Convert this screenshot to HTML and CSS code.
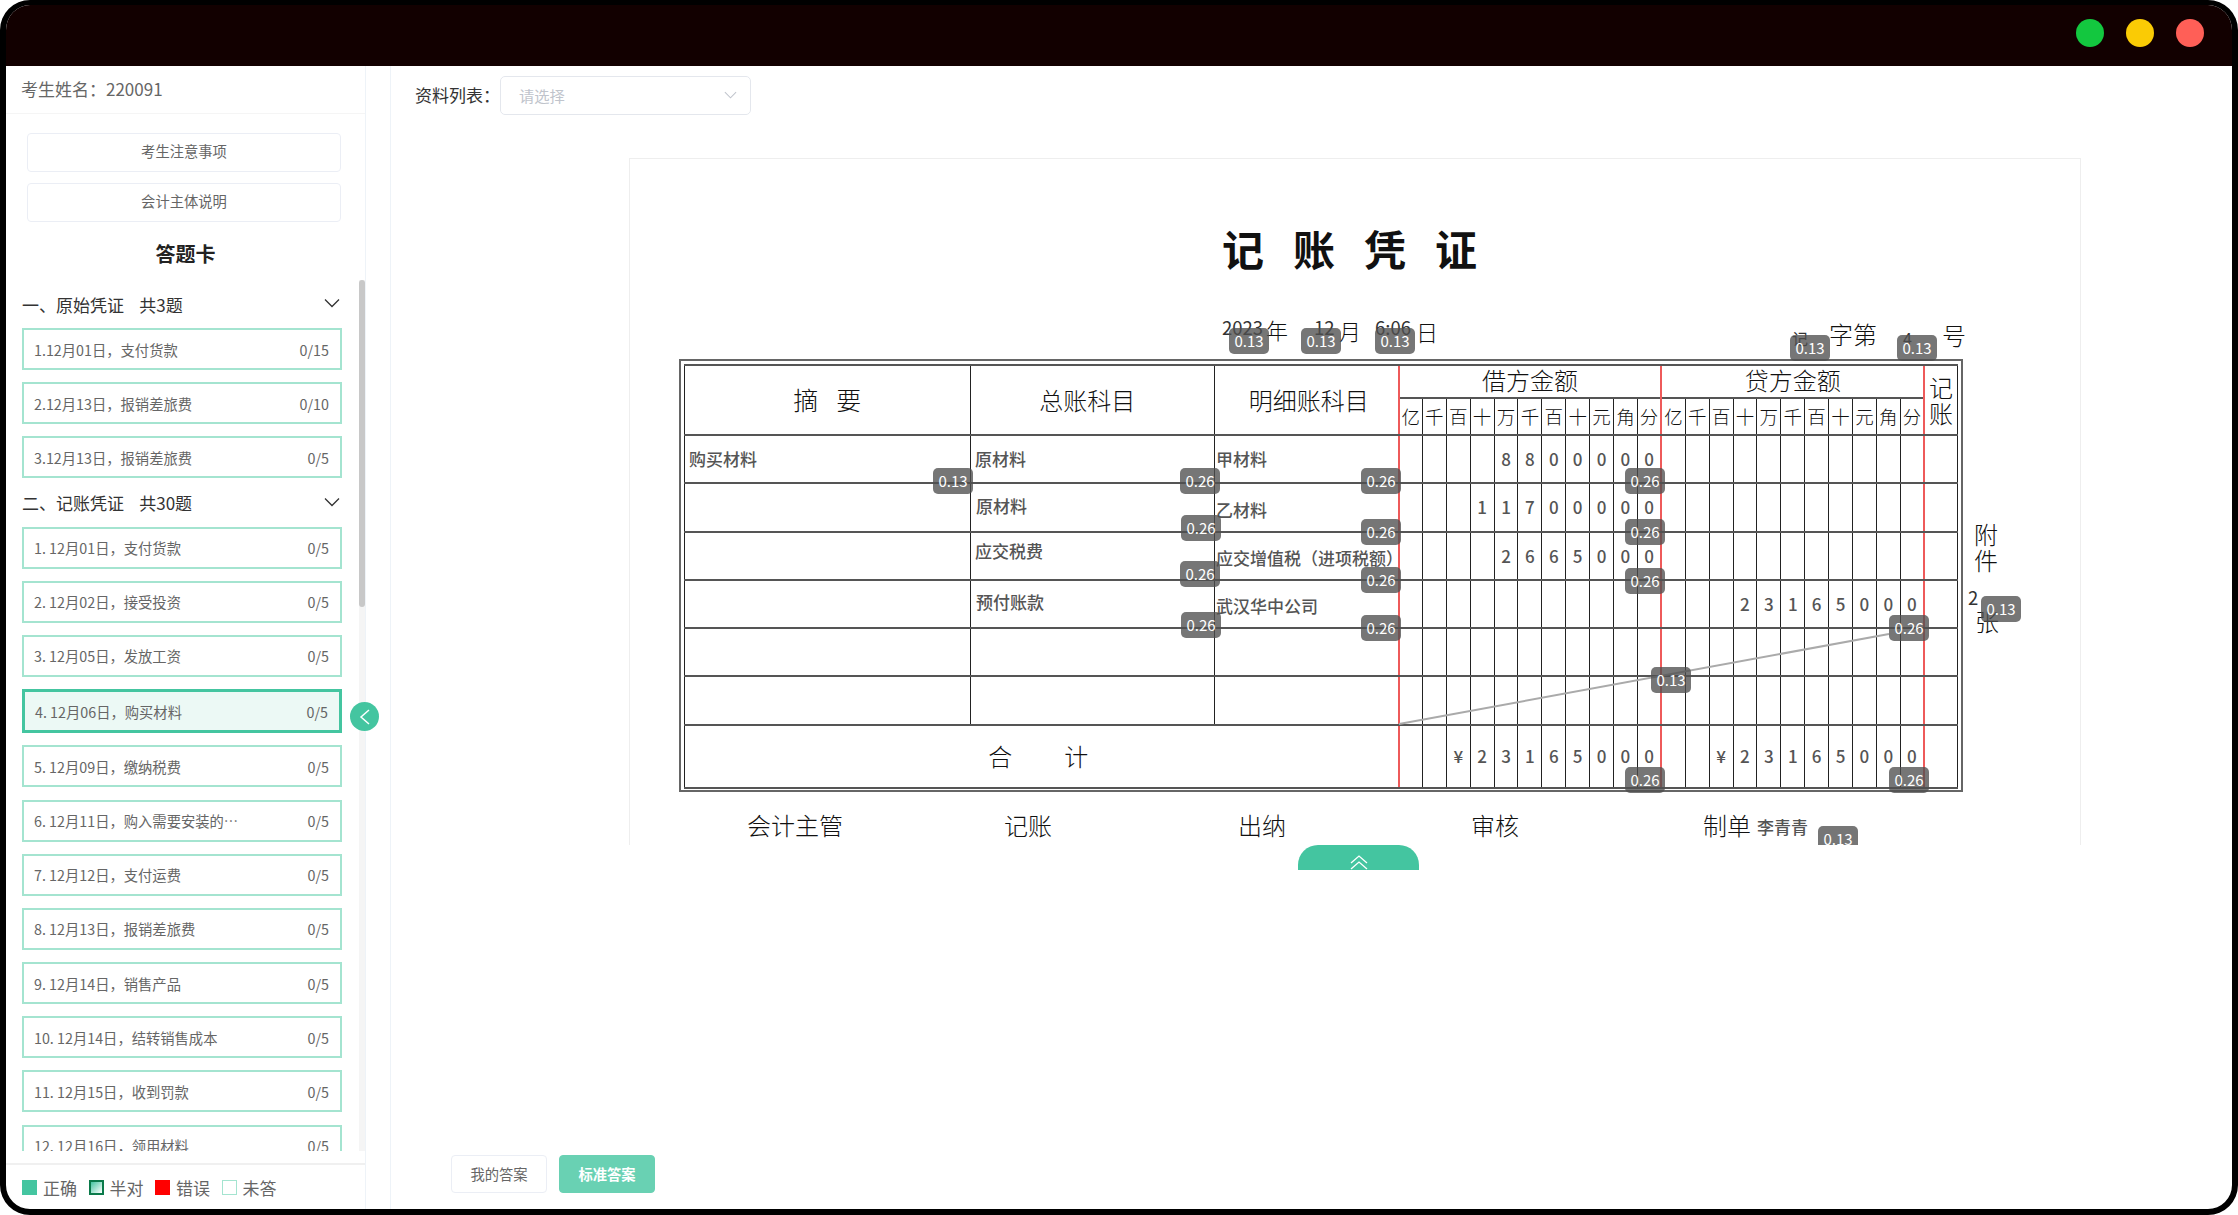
FILE: index.html
```html
<!DOCTYPE html>
<html lang="zh-CN">
<head>
    <meta charset="UTF-8">
    <meta name="viewport" content="width=device-width, initial-scale=1.0">
    <title>答题卡</title>
    <link rel="stylesheet" href="styles.css">
</head>
<body>
    <div class="window">
        <header class="titlebar">
            <span class="light green"></span>
            <span class="light yellow"></span>
            <span class="light red"></span>
        </header>

        <div class="content">
            <aside class="sidebar">
                <div class="student">考生姓名：220091</div>
                <button class="side-btn first">考生注意事项</button>
                <button class="side-btn">会计主体说明</button>
                <h2 class="card-title">答题卡</h2>

                <div class="list">
                    <div class="section-head">
                        <span>一、原始凭证&nbsp;&nbsp;&nbsp;&nbsp;共3题</span>
                        <svg class="chevron" viewBox="0 0 16 10"><polyline points="1,1.5 8,8.5 15,1.5"/></svg>
                    </div>
                    <div class="item"><span>1.12月01日，支付货款</span><span>0/15</span></div>
                    <div class="item"><span>2.12月13日，报销差旅费</span><span>0/10</span></div>
                    <div class="item"><span>3.12月13日，报销差旅费</span><span>0/5</span></div>

                    <div class="section-head second">
                        <span>二、记账凭证&nbsp;&nbsp;&nbsp;&nbsp;共30题</span>
                        <svg class="chevron" viewBox="0 0 16 10"><polyline points="1,1.5 8,8.5 15,1.5"/></svg>
                    </div>
                    <div class="item"><span>1. 12月01日，支付货款</span><span>0/5</span></div>
                    <div class="item"><span>2. 12月02日，接受投资</span><span>0/5</span></div>
                    <div class="item"><span>3. 12月05日，发放工资</span><span>0/5</span></div>
                    <div class="item active"><span>4. 12月06日，购买材料</span><span>0/5</span></div>
                    <div class="item"><span>5. 12月09日，缴纳税费</span><span>0/5</span></div>
                    <div class="item"><span>6. 12月11日，购入需要安装的…</span><span>0/5</span></div>
                    <div class="item"><span>7. 12月12日，支付运费</span><span>0/5</span></div>
                    <div class="item"><span>8. 12月13日，报销差旅费</span><span>0/5</span></div>
                    <div class="item"><span>9. 12月14日，销售产品</span><span>0/5</span></div>
                    <div class="item"><span>10. 12月14日，结转销售成本</span><span>0/5</span></div>
                    <div class="item"><span>11. 12月15日，收到罚款</span><span>0/5</span></div>
                    <div class="item"><span>12. 12月16日，领用材料</span><span>0/5</span></div>

                    <div class="scroll-track"><div class="scroll-thumb"></div></div>
                </div>

                <div class="legend">
                    <span class="key"><i class="swatch right"></i>正确</span>
                    <span class="key"><i class="swatch half"></i>半对</span>
                    <span class="key"><i class="swatch wrong"></i>错误</span>
                    <span class="key"><i class="swatch blank"></i>未答</span>
                </div>

                <div class="collapse">
                    <svg viewBox="0 0 12 16"><polyline points="10,1 2,8 10,15"/></svg>
                </div>
            </aside>
            <div class="gutter"></div>

            <main class="main">
                <div class="toolbar">
                    <label>资料列表：</label>
                    <div class="select">
                        <span>请选择</span>
                        <svg class="select-arrow" viewBox="0 0 16 10"><polyline points="1,1.5 8,8.5 15,1.5"/></svg>
                    </div>
                </div>

                <div class="voucher" id="voucher">
                    <div class="sheet">
                        <table>
                            <colgroup>
                                <col class="col-a"><col class="col-b"><col class="col-c">
                                <col span="22" class="col-unit">
                                <col class="col-mark">
                            </colgroup>
                            <thead id="voucherHead"></thead>
                            <tbody id="voucherBody"></tbody>
                        </table>
                    </div>
                    <svg class="slash" viewBox="0 0 1450 685">
                        <line x1="769" y1="565" x2="1259" y2="475"/>
                    </svg>
                </div>

                <div class="pull-up">
                    <svg viewBox="0 0 20 16"><polyline points="2,8 10,1 18,8"/><polyline points="2,14 10,7 18,14"/></svg>
                </div>

                <div class="answer-btns">
                    <button class="answer-btn">我的答案</button>
                    <button class="answer-btn on">标准答案</button>
                </div>
            </main>
        </div>
    </div>

    <script src="script.js"></script>
</body>
</html>
```

FILE: styles.css
```css
* {
    box-sizing: border-box;
}

body {
    margin: 0;
    background: #fff;
    font-family: "Noto Sans CJK SC", "Noto Sans", sans-serif;
    overflow: hidden;
}

.window {
    width: 2238px;
    height: 1215px;
    border: solid #000;
    border-width: 5px 6px 6px;
    border-radius: 30px;
    overflow: hidden;
    display: flex;
    flex-direction: column;
    background: #fff;
}

.titlebar {
    height: 61px;
    flex: none;
    background: #120000;
    display: flex;
    justify-content: flex-end;
    align-items: center;
    gap: 22px;
    padding-right: 28px;
    padding-bottom: 5px;
}

.light {
    width: 28px;
    height: 28px;
    border-radius: 50%;
}

.light.green { background: #13c73f; }
.light.yellow { background: #facb05; }
.light.red { background: #ff5f57; }

.content {
    flex: 1;
    display: flex;
    min-height: 0;
}

/* sidebar */
.sidebar {
    width: 360px;
    flex: none;
    border-right: 1px solid #eef3f8;
    display: flex;
    flex-direction: column;
    position: relative;
}

.student {
    height: 48px;
    padding-left: 15px;
    border-bottom: 1px solid #f5f5f5;
    font-size: 17px;
    line-height: 46px;
    color: #666;
}

.side-btn {
    display: block;
    width: 314px;
    height: 39px;
    margin: 11px 0 0 21px;
    background: #fff;
    border: 1px solid #ebeef5;
    border-radius: 4px;
    font-family: inherit;
    font-size: 14.3px;
    color: #666;
    padding: 0 0 5px;
}

.side-btn.first {
    margin-top: 19px;
}

.card-title {
    margin: 13px 0 0;
    height: 45px;
    text-align: center;
    font-size: 20px;
    line-height: 38px;
    font-weight: 700;
    color: #222;
}

.list {
    flex: 1;
    min-height: 0;
    overflow: hidden;
    position: relative;
    padding: 7px 0 0 16px;
}

.section-head {
    width: 320px;
    height: 34px;
    margin-bottom: 7px;
    display: flex;
    justify-content: space-between;
    align-items: center;
    font-size: 17px;
    color: #333;
}

.section-head.second {
    margin-top: -5px;
}

.chevron {
    width: 16px;
    height: 10px;
    margin-right: 2px;
    margin-bottom: 2px;
}

.chevron polyline,
.select-arrow polyline {
    fill: none;
    stroke: #333;
    stroke-width: 1.3;
}

.item {
    width: 320px;
    height: 42px;
    margin-bottom: 12.2px;
    padding: 0 11px 0 10px;
    border: 2px solid #a4e4d0;
    display: flex;
    justify-content: space-between;
    align-items: center;
    font-size: 14.3px;
    color: #666;
}

.item.active {
    height: 44px;
    border: 3px solid #44c5a0;
    background: #ecf9f5;
}

.scroll-track {
    position: absolute;
    right: 0;
    top: 0;
    bottom: 0;
    width: 6px;
    background: #f5f5f5;
}

.scroll-thumb {
    height: 327px;
    background: #c8c8c8;
    border-radius: 3px;
}

.legend {
    height: 46px;
    flex: none;
    margin-top: 12px;
    border-top: 2px solid #f0f0f0;
    padding-left: 16px;
    display: flex;
    align-items: center;
    gap: 11.5px;
    font-size: 17px;
    color: #666;
}

.key {
    display: flex;
    align-items: center;
    gap: 6px;
}

.swatch {
    display: block;
    width: 15px;
    height: 15px;
}

.swatch.right { background: #44c5a0; }
.swatch.half { border: 2px solid #0a7a4a; background: linear-gradient(135deg, #44c5a0, #fff); }
.swatch.wrong { background: #ff0000; }
.swatch.blank { border: 1px solid #a4e4d0; }

.collapse {
    position: absolute;
    left: 344px;
    top: 636px;
    width: 29px;
    height: 29px;
    border-radius: 50%;
    background: #44c5a0;
    display: flex;
    align-items: center;
    justify-content: center;
}

.collapse svg {
    width: 12px;
    height: 16px;
}

.collapse polyline {
    fill: none;
    stroke: #fff;
    stroke-width: 1.5;
}

.gutter {
    width: 25px;
    flex: none;
    border-right: 1px solid #eef3f8;
}

/* main area */
.main {
    flex: 1;
    min-width: 0;
    display: flex;
    flex-direction: column;
    position: relative;
}

.toolbar {
    display: flex;
    align-items: center;
    height: 39px;
    margin: 10px 0 0 24px;
    font-size: 17px;
    color: #333;
}

.toolbar label {
    width: 85px;
    padding-bottom: 2px;
}

.select {
    width: 251px;
    height: 39px;
    border: 1px solid #e4e7ed;
    border-radius: 5px;
    display: flex;
    justify-content: space-between;
    align-items: center;
    padding: 0 13px 2px 18px;
    font-size: 15.3px;
    color: #c0c4cc;
}

.select-arrow {
    width: 13px;
    height: 8px;
}

.select-arrow polyline {
    stroke: #c0c4cc;
}

.voucher {
    position: relative;
    width: 1452px;
    height: 687px;
    flex: none;
    margin: 43px 0 0 238px;
    border: 1px solid #eee;
    border-bottom: none;
    overflow: hidden;
}

.sheet {
    width: 1284px;
    height: 433px;
    margin: 200px 0 0 49px;
    padding: 3px;
    border: 2px solid #666;
}

table {
    width: 1273px;
    height: 423px;
    table-layout: fixed;
    border-collapse: collapse;
}

.col-a { width: 285.5px; }
.col-b { width: 244.5px; }
.col-c { width: 184px; }
.col-unit { width: 23.9px; }
.col-mark { width: 33.2px; }

th, td {
    padding: 0;
    border: 1px solid #222;
    border-top: 2px solid #555;
    border-bottom: 2px solid #555;
    text-align: center;
    overflow: hidden;
    white-space: nowrap;
    line-height: 1;
}

th {
    font-weight: 300;
    color: #111;
}

.top-row { height: 33px; }
.unit-row { height: 37px; }
tbody tr { height: 48.3px; }
tbody tr.total { height: 63px; }

.head-wide { font-size: 24px; padding-bottom: 1px; }
.head-wide.shifted { padding-right: 10px; }
.head-wide.nudged { padding-left: 5px; }
.head-spaced { font-size: 25px; letter-spacing: 18px; text-indent: 18px; padding-bottom: 1px; }
.head-money { font-size: 24px; border-bottom-width: 1px; padding-bottom: 3px; }
.head-mark { font-size: 24px; line-height: 26px; white-space: normal; }
.head-unit { font-size: 18.5px; }

td.digit {
    font-size: 17px;
    font-weight: 500;
    color: #555;
    padding-bottom: 1px;
}

.red-left {
    border-left: 2px solid #ee5a5a;
}

td.sum-label {
    font-size: 24px;
    font-weight: 300;
    color: #111;
    letter-spacing: 52px;
    text-indent: 46px;
}

/* things written on top of the voucher */
.mark {
    position: absolute;
    transform: translateY(-50%);
    white-space: nowrap;
}

.print {
    font-size: 24px;
    font-weight: 300;
    color: #111;
}

.print.small {
    font-size: 22px;
}

.title {
    font-size: 42px;
    font-weight: 700;
    letter-spacing: 29px;
    color: #111;
}

.fill {
    font-size: 17px;
    font-weight: 500;
    color: #555;
}

.value {
    font-size: 18.5px;
    color: #333;
}

.value.small {
    font-size: 16px;
}

.slash {
    position: absolute;
    left: 0;
    top: 0;
    width: 1450px;
    height: 685px;
}

.slash line {
    stroke: #aaa;
    stroke-width: 2;
}

.badge {
    position: absolute;
    width: 40px;
    height: 26px;
    border-radius: 5px;
    background: rgba(80, 80, 80, 0.78);
    color: #fff;
    font-size: 15px;
    line-height: 26px;
    text-align: center;
}

.pull-up {
    position: absolute;
    left: 907px;
    top: 779px;
    width: 121px;
    height: 25px;
    border-radius: 20px 20px 0 0;
    background: #44c5a0;
    overflow: hidden;
    text-align: center;
    padding-top: 10px;
}

.pull-up svg {
    display: block;
    width: 20px;
    height: 16px;
    margin: 0 auto;
}

.pull-up polyline {
    fill: none;
    stroke: #fff;
    stroke-width: 1.3;
}

.answer-btns {
    margin-top: auto;
    padding: 0 0 16px 60px;
    display: flex;
    gap: 12px;
}

.answer-btn {
    width: 96px;
    height: 38px;
    border: 1px solid #ebeef5;
    border-radius: 4px;
    background: #fff;
    font-family: inherit;
    font-size: 14.3px;
    color: #666;
    padding: 0 0 2px;
}

.answer-btn.on {
    background: #69d1b3;
    border-color: #69d1b3;
    color: #fff;
    font-weight: 700;
}
```

FILE: script.js
```js
// voucher origin in page pixels, the positions below are read off the form
const originX = 630;
const originY = 159;

const units = "亿千百十万千百十元角分".split("");

const rows = [
    { debit: "    8800000", credit: "           " },
    { debit: "   11700000", credit: "           " },
    { debit: "    2665000", credit: "           " },
    { debit: "           ", credit: "   23165000" },
    { debit: "           ", credit: "           " },
    { debit: "           ", credit: "           " }
];

const marks = [
    ["title", 1222, 247, "记账凭证"],
    ["value", 1222, 327, "2023"],
    ["print small", 1266, 329, "年"],
    ["value", 1314, 327, "12"],
    ["print small", 1339, 330, "月"],
    ["value", 1375, 327, "6:06"],
    ["print small", 1416, 331, "日"],
    ["value small", 1792, 338, "记"],
    ["print", 1829, 333, "字第"],
    ["value small", 1903, 338, "4"],
    ["print", 1942, 334, "号"],
    ["fill", 689, 458, "购买材料"],
    ["fill", 975, 458, "原材料"],
    ["fill", 1216, 458, "甲材料"],
    ["fill", 976, 505, "原材料"],
    ["fill", 1216, 509, "乙材料"],
    ["fill", 975, 550, "应交税费"],
    ["fill", 1216, 557, "应交增值税（进项税额）"],
    ["fill", 976, 601, "预付账款"],
    ["fill", 1216, 605, "武汉华中公司"],
    ["print", 1974, 533, "附"],
    ["print", 1974, 559, "件"],
    ["value", 1968, 597, "2"],
    ["print", 1975, 620, "张"],
    ["print", 747, 824, "会计主管"],
    ["print", 1004, 824, "记账"],
    ["print", 1238, 824, "出纳"],
    ["print", 1471, 824, "审核"],
    ["print", 1703, 824, "制单"],
    ["fill", 1757, 826, "李青青"]
];

const badges = [
    [1229, 328, "0.13"], [1301, 328, "0.13"], [1375, 328, "0.13"],
    [1790, 335, "0.13"], [1897, 335, "0.13"],
    [933, 468, "0.13"], [1180, 468, "0.26"], [1361, 468, "0.26"], [1625, 468, "0.26"],
    [1181, 515, "0.26"], [1361, 519, "0.26"], [1625, 519, "0.26"],
    [1180, 561, "0.26"], [1361, 567, "0.26"], [1625, 568, "0.26"],
    [1181, 612, "0.26"], [1361, 615, "0.26"], [1889, 615, "0.26"],
    [1981, 596, "0.13"], [1651, 667, "0.13"],
    [1625, 767, "0.26"], [1889, 767, "0.26"],
    [1818, 826, "0.13"]
];

function digitCells(text) {
    return text.split("").map((ch, i) => {
        const red = i === 0 ? " red-left" : "";
        return `<td class="digit${red}">${ch.trim()}</td>`;
    }).join("");
}

function unitCells() {
    return units.map((u, i) => {
        const red = i === 0 ? " red-left" : "";
        return `<th class="head-unit${red}">${u}</th>`;
    }).join("");
}

document.getElementById("voucherHead").innerHTML = `
    <tr class="top-row">
        <th rowspan="2" class="head-spaced">摘要</th>
        <th rowspan="2" class="head-wide shifted">总账科目</th>
        <th rowspan="2" class="head-wide nudged">明细账科目</th>
        <th colspan="11" class="head-money red-left">借方金额</th>
        <th colspan="11" class="head-money red-left">贷方金额</th>
        <th rowspan="2" class="head-mark red-left">记账</th>
    </tr>
    <tr class="unit-row">${unitCells()}${unitCells()}</tr>
`;

const body = document.getElementById("voucherBody");
rows.forEach(row => {
    const tr = document.createElement("tr");
    tr.innerHTML = `<td></td><td></td><td></td>
        ${digitCells(row.debit)}${digitCells(row.credit)}
        <td class="red-left"></td>`;
    body.appendChild(tr);
});

const total = document.createElement("tr");
total.className = "total";
total.innerHTML = `<td colspan="3" class="sum-label">合计</td>
    ${digitCells("  ¥23165000")}${digitCells("  ¥23165000")}
    <td class="red-left"></td>`;
body.appendChild(total);

const voucher = document.getElementById("voucher");

marks.forEach(([cls, x, y, text]) => {
    const el = document.createElement("span");
    el.className = "mark " + cls;
    el.style.left = (x - originX) + "px";
    el.style.top = (y - originY) + "px";
    el.textContent = text;
    voucher.appendChild(el);
});

badges.forEach(([x, y, text]) => {
    const el = document.createElement("span");
    el.className = "badge";
    el.style.left = (x - originX) + "px";
    el.style.top = (y - originY) + "px";
    el.textContent = text;
    voucher.appendChild(el);
});
```
